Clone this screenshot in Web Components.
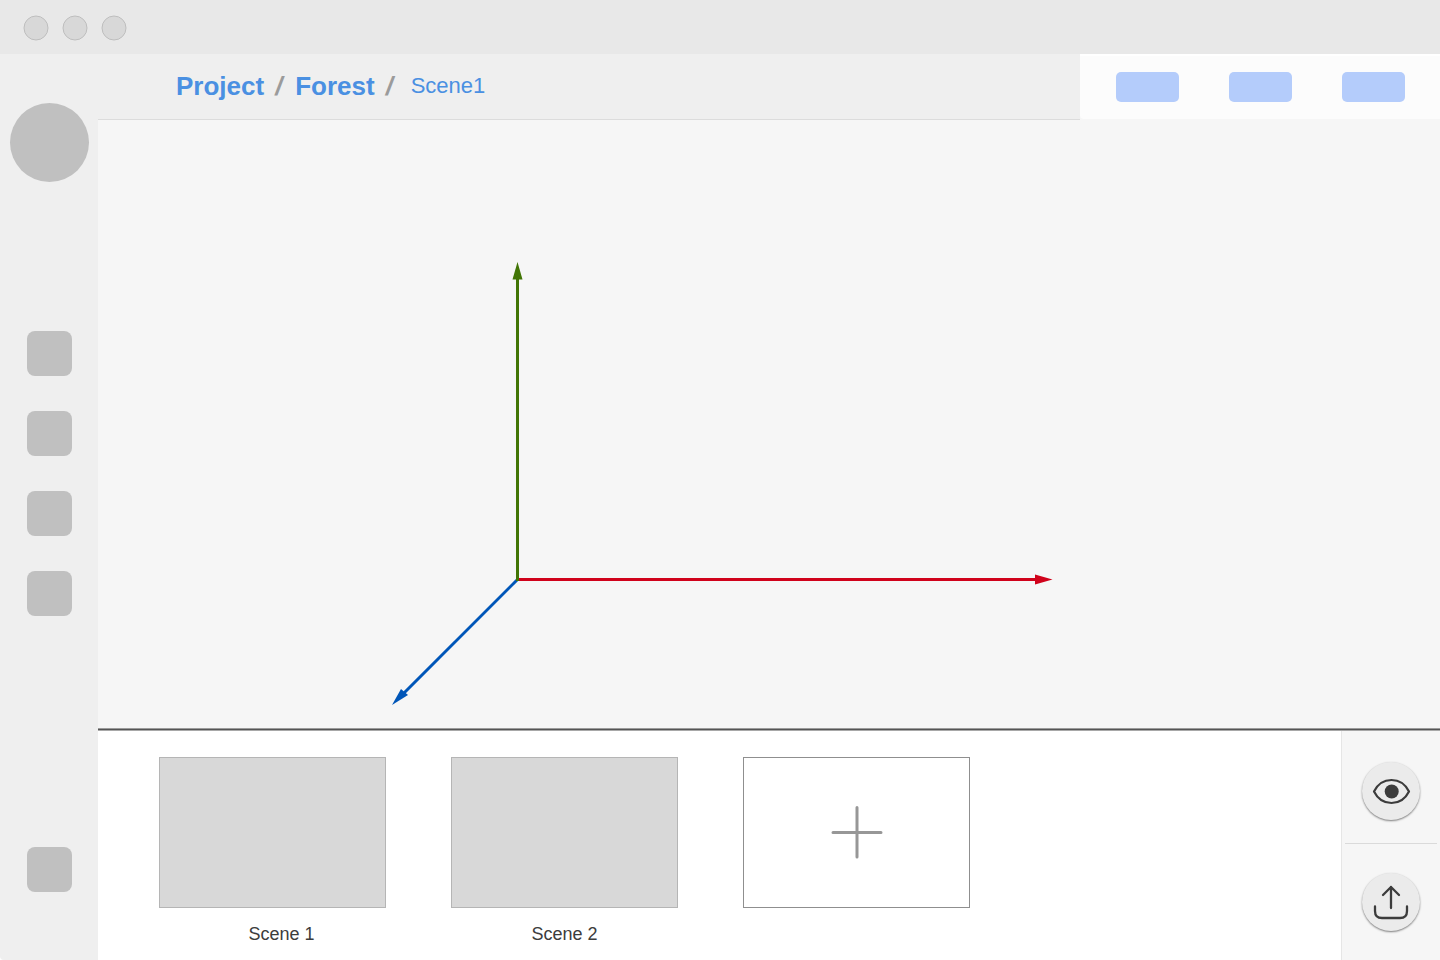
<!DOCTYPE html>
<html lang="en">
<head>
<meta charset="utf-8">
<title>Scene editor</title>
<style>
body { margin: 0; font-family: "Liberation Sans", Arial, sans-serif; background: #fff; }
</style>
</head>
<body>
<scene-app></scene-app>
<script>
const define = (name, html) => {
  const template = document.createElement('template');
  template.innerHTML = html;
  customElements.define(name, class extends HTMLElement {
    constructor() {
      super();
      this.attachShadow({ mode: 'open' }).append(template.content.cloneNode(true));
    }
  });
};

define('window-bar', `
<style>
:host { display: flex; gap: 13px; box-sizing: border-box; padding: 15px 23px 13px; background: #e8e8e8; }
button { display: block; width: 26px; height: 26px; padding: 0; border: 0; background: none; }
svg { display: block; }
circle { fill: #d8d8d8; stroke: #bebebe; }
</style>
<button aria-label="Close"><svg width="26" height="26"><circle cx="13" cy="13" r="12"/></svg></button>
<button aria-label="Minimize"><svg width="26" height="26"><circle cx="13" cy="13" r="12"/></svg></button>
<button aria-label="Zoom"><svg width="26" height="26"><circle cx="13" cy="13" r="12"/></svg></button>`);

define('side-nav', `
<style>
:host { display: flex; flex-direction: column; align-items: center; box-sizing: border-box; padding: 49px 0 68px; background: #efefef; border-bottom-left-radius: 4px; }
button { display: block; padding: 0; border: 0; background: #c0c0c0; width: 45px; height: 45px; border-radius: 8px; }
.avatar { width: 79px; height: 79px; border-radius: 50%; }
nav { display: flex; flex-direction: column; gap: 35px; margin: 149px 0 35px; }
.last { margin-top: auto; }
</style>
<button class="avatar" aria-label="Account"></button>
<nav aria-label="Tools">
<button aria-label="Tool 1"></button><button aria-label="Tool 2"></button><button aria-label="Tool 3"></button><button aria-label="Tool 4"></button>
</nav>
<button class="last" aria-label="Settings"></button>`);

define('bread-crumbs', `
<style>
:host { display: flex; align-items: center; box-sizing: border-box; padding: 0 78px 2px; background: #efefef; border-bottom: 1px solid #dcdcdc; }
nav { display: flex; align-items: center; font-size: 26px; line-height: 30px; color: #9b9b9b; }
a { color: #4a90e2; font-weight: bold; text-decoration: none; }
i { width: 8px; margin: 0 12px 0 11px; font-weight: bold; }
.current { font-size: 22px; font-weight: normal; margin-left: 5px; }
</style>
<nav aria-label="Breadcrumb"><a href="#project">Project</a><i>/</i><a href="#forest">Forest</a><i>/</i><a class="current" href="#scene1" aria-current="page">Scene1</a></nav>`);

define('quick-actions', `
<style>
:host { display: flex; justify-content: center; align-items: center; gap: 50px; box-sizing: border-box; height: 65px; padding-bottom: 2px; background: #fcfcfc; border-top: 2px solid #fff; border-bottom-left-radius: 4px; }
button { display: block; width: 63px; height: 30px; padding: 0; border: 0; border-radius: 5px; background: #b4ccfb; }
</style>
<button aria-label="Action 1"></button><button aria-label="Action 2"></button><button aria-label="Action 3"></button>`);

define('axis-view', `
<style>
:host { display: grid; background: #f6f6f6; min-height: 0; }
svg { display: block; width: 100%; height: 100%; min-height: 0; }
</style>
<svg viewBox="0 0 1342 608" role="img" aria-label="Scene axes" stroke-width="3">
<path d="M419.500 459.500L304 575" stroke="#0056b8"/>
<path d="M294 585L303 569L310 575Z" fill="#0056b8"/>
<path d="M419.500 459.500H940" stroke="#d0021b"/>
<path d="M954.500 459.500L937 454.500V464.500Z" fill="#d0021b"/>
<path d="M419.500 461V158" stroke="#417505"/>
<path d="M419.500 142L414.500 159.500H424.500Z" fill="#417505"/>
</svg>`);

define('scene-card', `
<style>
:host { display: block; width: 227px; }
button { display: block; box-sizing: border-box; width: 100%; height: 151px; padding: 0; border: 1px solid #b5b5b5; background: #d8d8d8; }
label { display: block; margin-top: 16px; padding-left: var(--caption-inset, 0); font-size: 18px; line-height: 20px; text-align: center; color: #3c3c3c; }
</style>
<button id="thumb"></button><label for="thumb"><slot></slot></label>`);

define('add-scene', `
<style>
:host { display: block; width: 227px; }
button { display: grid; place-items: center; box-sizing: border-box; width: 100%; height: 151px; padding: 0; border: 1px solid #8f8f8f; background: #fff; }
svg { display: block; }
</style>
<button aria-label="Add scene"><svg width="53" height="53" fill="none" stroke="#979797" stroke-width="3" stroke-linecap="round"><path d="M3 26.500H51M27 1.500V51"/></svg></button>`);

define('scene-strip', `
<style>
:host { display: flex; align-items: flex-start; gap: 65px; box-sizing: border-box; padding: 26px 61px 16px; background: #fff; }
.wide { --caption-inset: 18px; }
</style>
<scene-card class="wide">Scene 1</scene-card><scene-card>Scene 2</scene-card><add-scene></add-scene>`);

define('round-button', `
<style>
:host { display: block; }
button { display: grid; place-items: center; width: 58px; height: 58px; padding: 0; border: 0; border-radius: 50%; background: #ebebeb; box-shadow: 0 1px 2px rgba(0,0,0,.5); }
</style>
<button><slot></slot></button>`);

define('output-rail', `
<style>
:host { display: flex; flex-direction: column; align-items: center; box-sizing: border-box; padding: 31px 3px 28px; background: #f6f6f6; border-left: 1px solid #e6e6e6; }
hr { width: 92px; height: 1px; margin: 23px 0 29px; border: 0; background: #dadada; }
svg { display: block; }
</style>
<round-button><svg width="40" height="40" role="img" aria-label="Preview" fill="none" stroke="#3c3c3c" stroke-width="2.200"><path d="M3 20.500C6.500 13.500 12.500 9 20.500 9S34.500 13.500 38 20.500C34.500 27.500 28.500 32 20.500 32S6.500 27.500 3 20.500Z" stroke-linejoin="round"/><circle cx="20.700" cy="20.500" r="7" fill="#3c3c3c" stroke="none"/></svg></round-button>
<hr>
<round-button><svg width="40" height="40" role="img" aria-label="Export" fill="none" stroke="#3c3c3c" stroke-width="2.300" stroke-linecap="round" stroke-linejoin="round"><path d="M20 26V5M12 13L20 5L28 13M4 24.500V29C4 33.500 6.500 36 11 36H29C33.500 36 36 33.500 36 29V24.500"/></svg></round-button>`);

define('scene-app', `
<style>
:host { display: grid; min-height: 100vh; grid-template-rows: 54px 1fr; grid-template-columns: 98px 1fr; }
window-bar { grid-column: 1 / -1; }
main { display: grid; grid-template-rows: 66px 1fr auto; min-width: 0; }
header { display: grid; grid-template-columns: 1fr 360px; background: #f6f6f6; }
footer { display: grid; grid-template-columns: 1fr 99px; padding-top: 3px; background: linear-gradient(#9b9b9b 1px, #555 1px 2px, #a8a8a8 2px); }
</style>
<window-bar></window-bar>
<side-nav></side-nav>
<main>
<header><bread-crumbs></bread-crumbs><quick-actions></quick-actions></header>
<axis-view></axis-view>
<footer><scene-strip></scene-strip><output-rail></output-rail></footer>
</main>`);
</script>
</body>
</html>
